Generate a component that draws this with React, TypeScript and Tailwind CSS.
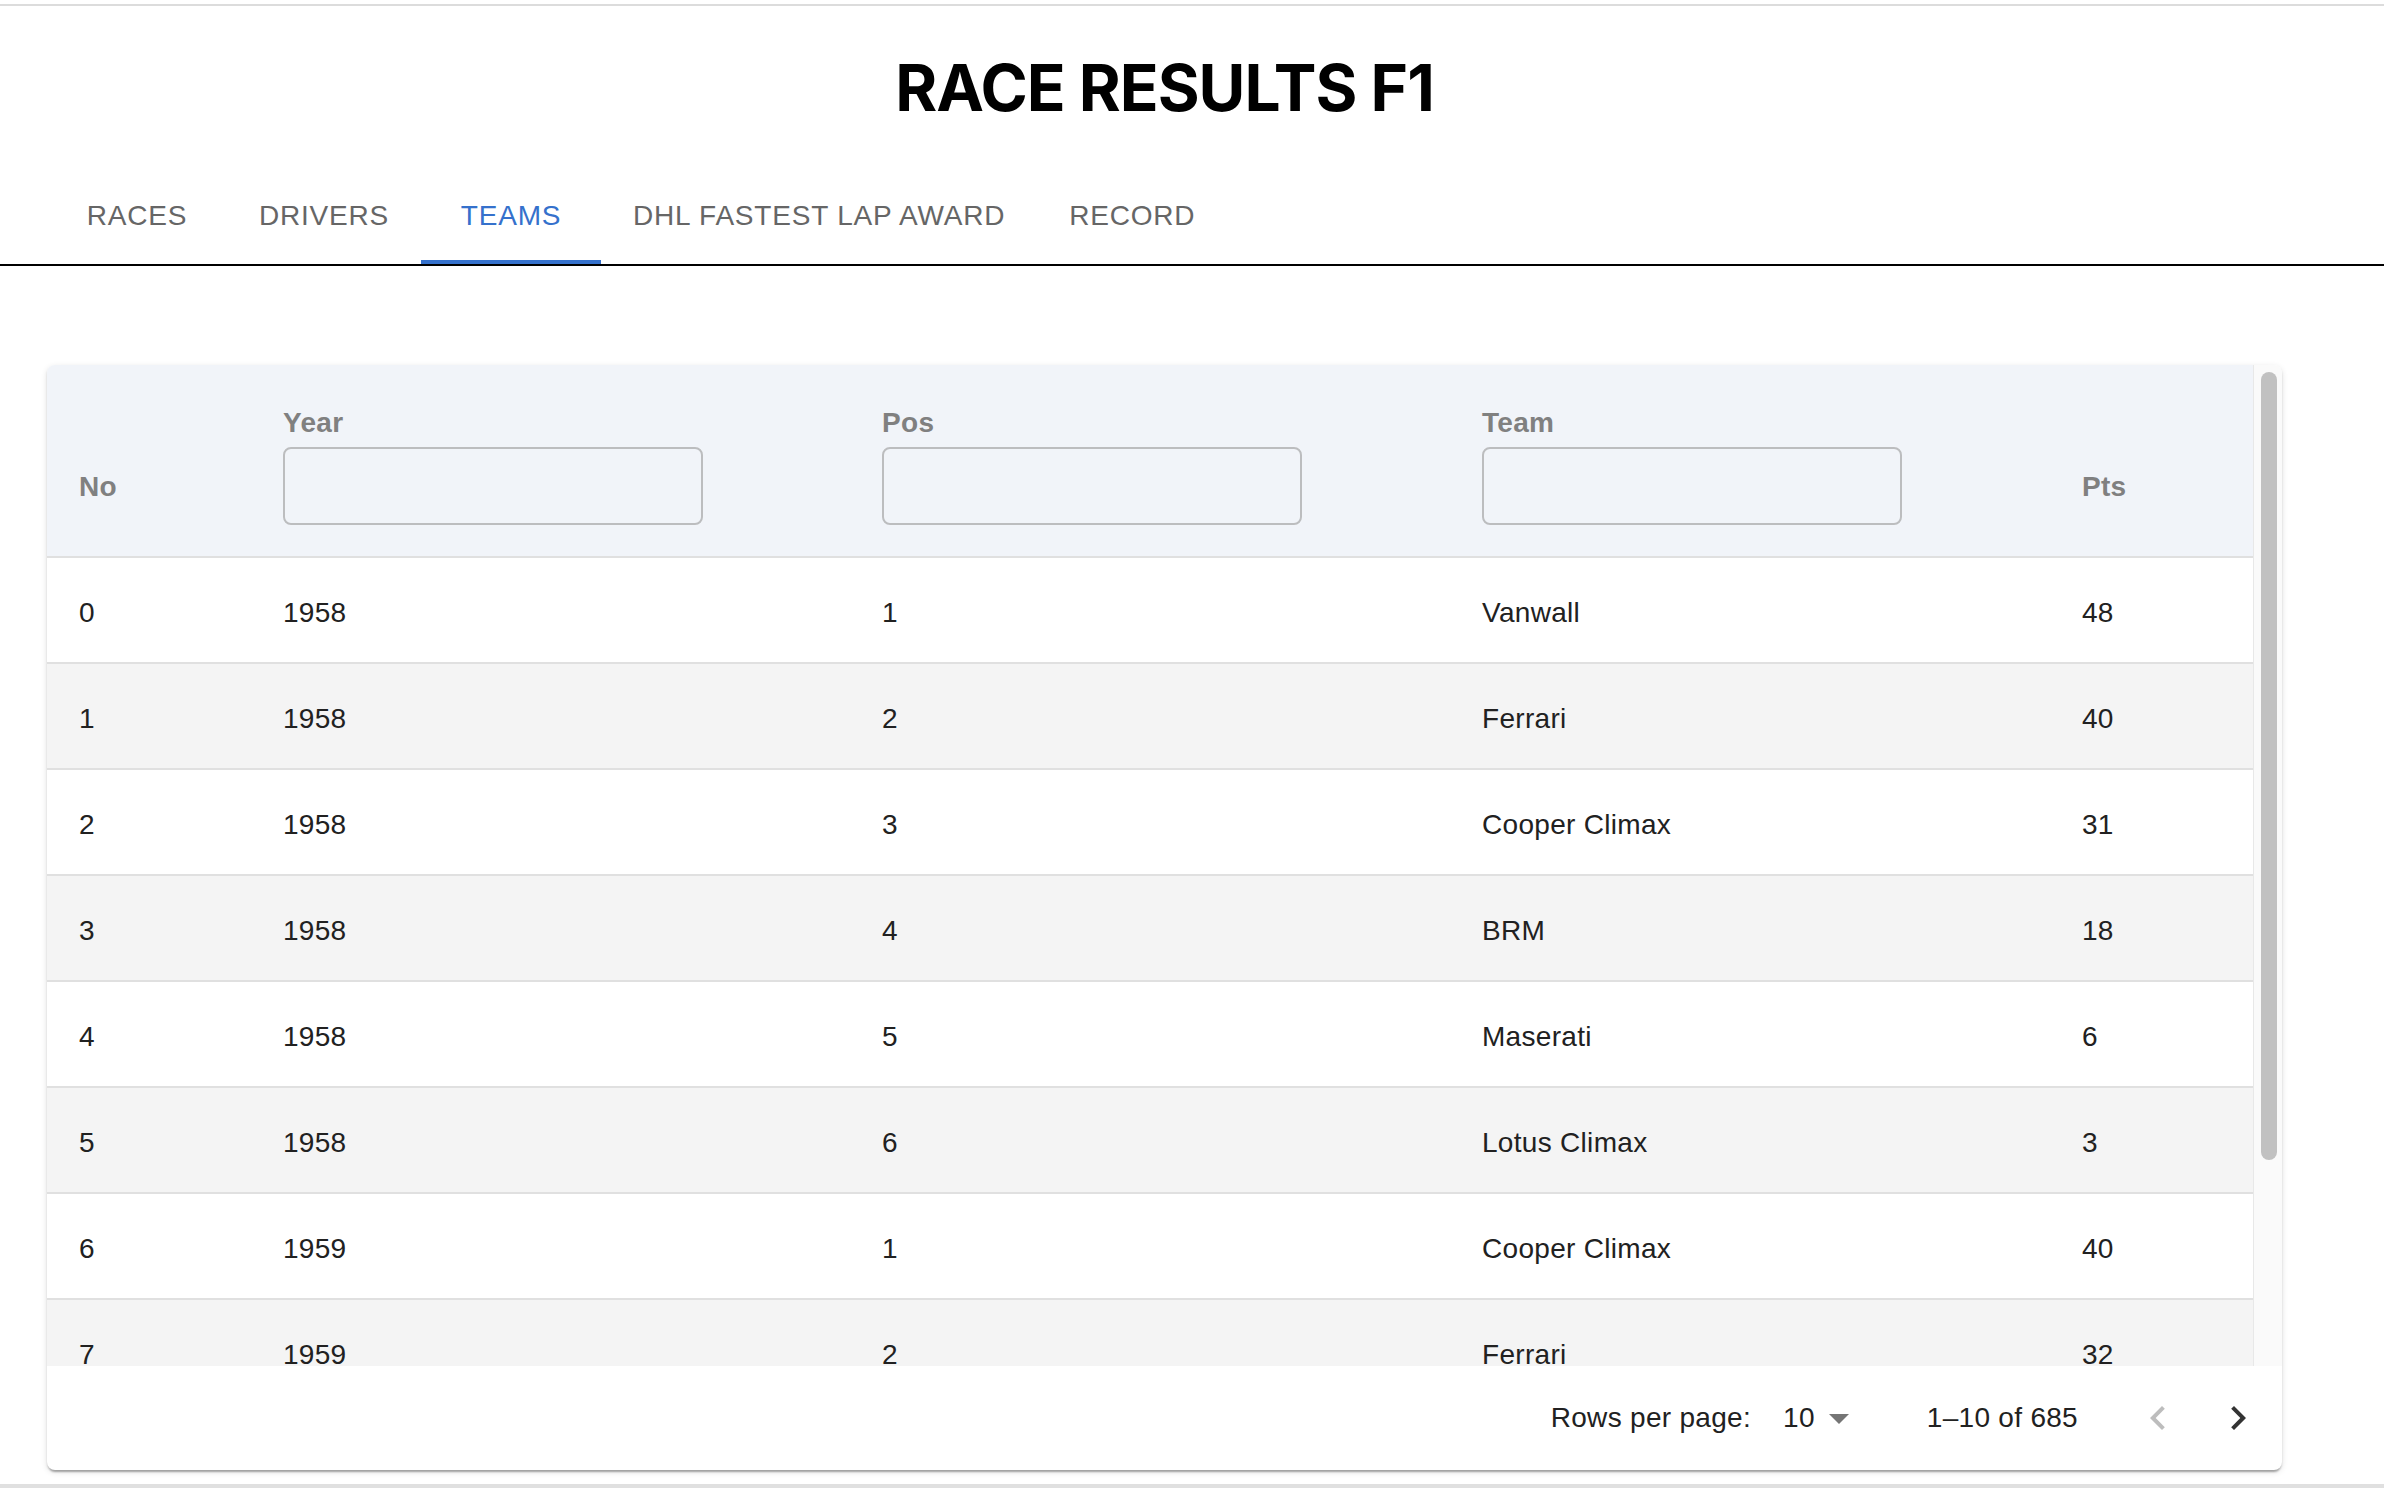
import React from "react";

type Row = { no: number; year: number; pos: number; team: string; pts: number };

const rows: Row[] = [
  { no: 0, year: 1958, pos: 1, team: "Vanwall", pts: 48 },
  { no: 1, year: 1958, pos: 2, team: "Ferrari", pts: 40 },
  { no: 2, year: 1958, pos: 3, team: "Cooper Climax", pts: 31 },
  { no: 3, year: 1958, pos: 4, team: "BRM", pts: 18 },
  { no: 4, year: 1958, pos: 5, team: "Maserati", pts: 6 },
  { no: 5, year: 1958, pos: 6, team: "Lotus Climax", pts: 3 },
  { no: 6, year: 1959, pos: 1, team: "Cooper Climax", pts: 40 },
  { no: 7, year: 1959, pos: 2, team: "Ferrari", pts: 32 },
];

const tabs = ["Races", "Drivers", "Teams", "DHL Fastest Lap Award", "Record"];

function FilterHead({ label }: { label: string }) {
  return (
    <div className="flex flex-col pl-[32px]">
      <div className="h-[32px] leading-[32px] font-bold text-[#808080]">{label}</div>
      <div className="mt-[8px] h-[78px] w-[420px] rounded-[8px] border-2 border-[#bcbdbf]" />
    </div>
  );
}

function PlainHead({ label }: { label: string }) {
  return (
    <div className="flex flex-col pl-[32px]">
      <div className="h-[32px]" />
      <div className="mt-[8px] h-[78px] flex items-center pt-[2px] font-bold text-[#808080]">{label}</div>
    </div>
  );
}

export default function App() {
  return (
    <div className="h-[1488px] w-[2384px] bg-white flex flex-col text-[28px] tracking-[0.3px] font-['Liberation_Sans',Arial,sans-serif] text-[#212121] overflow-hidden">
      {/* top rule */}
      <div className="mt-[4px] h-[2px] bg-[#dcdcdc]" />

      {/* TITLE */}
      <div className="w-[2329px] pt-[50px] text-center">
        <h1 className="font-['Inter',sans-serif] font-bold text-[64px] leading-none tracking-[-1px] text-black">RACE RESULTS F1</h1>
      </div>

      {/* TABS */}
      <div className="mt-[48px] flex pl-[47px] border-b-2 border-black">
        {tabs.map((t) => {
          const active = t === "Teams";
          return (
            <div
              key={t}
              className={
                active
                  ? "h-[96px] min-w-[180px] px-[32px] flex items-center justify-center uppercase tracking-[0.8px] text-[#3571cc] border-b-4 border-[#3571cc] pt-[4px]"
                  : "h-[96px] min-w-[180px] px-[32px] flex items-center justify-center uppercase tracking-[0.8px] text-[#666666]"
              }
            >
              {t}
            </div>
          );
        })}
      </div>

      {/* TABLE CARD */}
      <div className="w-[2329px] px-[47px] mt-[99px]">
        <div className="rounded-[8px] bg-white shadow-[0_4px_2px_-2px_rgba(0,0,0,0.2),0_2px_2px_0_rgba(0,0,0,0.14),0_2px_6px_0_rgba(0,0,0,0.12)] overflow-hidden">
          <div className="flex h-[1001px]">
            <div className="flex-1 overflow-hidden">
              {/* header */}
              <div className="grid grid-cols-[204px_599px_600px_600px_1fr] h-[193px] bg-[#f1f4f9] border-b-2 border-[#e0e0e0] pt-[42px]">
                <PlainHead label="No" />
                <FilterHead label="Year" />
                <FilterHead label="Pos" />
                <FilterHead label="Team" />
                <PlainHead label="Pts" />
              </div>

              {/* body */}
              {rows.map((r, i) => (
                <div
                  key={r.no}
                  className={
                    i % 2 === 0
                      ? "grid grid-cols-[204px_599px_600px_600px_1fr] h-[106px] items-center pt-[6px] bg-white border-b-2 border-[#e0e0e0]"
                      : "grid grid-cols-[204px_599px_600px_600px_1fr] h-[106px] items-center pt-[6px] bg-[#f4f4f4] border-b-2 border-[#e0e0e0]"
                  }
                >
                  <div className="pl-[32px]">{r.no}</div>
                  <div className="pl-[32px]">{r.year}</div>
                  <div className="pl-[32px]">{r.pos}</div>
                  <div className="pl-[32px]">{r.team}</div>
                  <div className="pl-[32px]">{r.pts}</div>
                </div>
              ))}
            </div>

            {/* scrollbar */}
            <div className="w-[29px] border-l border-[#e8e8e8] bg-[#fafafa]">
              <div className="ml-[7px] mt-[7px] h-[788px] w-[16px] rounded-full bg-[#c1c1c1]" />
            </div>
          </div>

          {/* pagination */}
          <div className="h-[104px] flex items-center justify-end pr-[4px]">
            <span>Rows per page:</span>
            <div className="ml-[16px] mr-[64px] flex items-center pl-[16px]">
              <span>10</span>
              <svg width="48" height="48" viewBox="0 0 24 24" fill="#757575">
                <path d="M7 10l5 5 5-5z" />
              </svg>
            </div>
            <span>1–10 of 685</span>
            <div className="ml-[40px] flex">
              <div className="w-[80px] h-[80px] flex items-center justify-center">
                <svg width="48" height="48" viewBox="0 0 24 24" fill="#bdbdbd">
                  <path d="M15.41 16.59 10.83 12l4.58-4.59L14 6l-6 6 6 6z" />
                </svg>
              </div>
              <div className="w-[80px] h-[80px] flex items-center justify-center">
                <svg width="48" height="48" viewBox="0 0 24 24" fill="#333333">
                  <path d="M8.59 16.59 13.17 12 8.59 7.41 10 6l6 6-6 6z" />
                </svg>
              </div>
            </div>
          </div>
        </div>
      </div>

      <div className="flex-1" />
      {/* bottom rule */}
      <div className="h-[4px] bg-[#e0e0e0]" />
    </div>
  );
}
